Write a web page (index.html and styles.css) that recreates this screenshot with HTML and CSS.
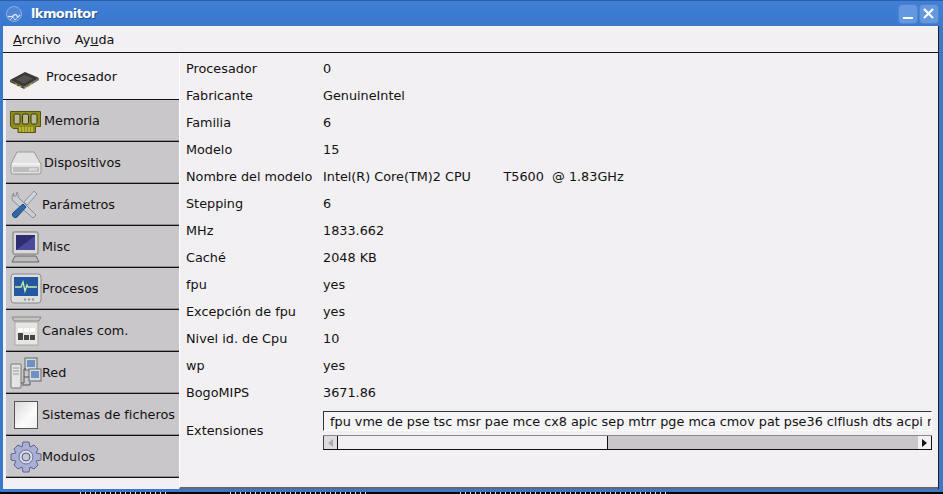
FILE: index.html
```html
<!DOCTYPE html>
<html lang="es">
<head>
    <meta charset="UTF-8">
    <title>lkmonitor</title>
    <link rel="stylesheet" href="styles.css">
</head>
<body>
<div class="window">
    <div class="titlebar">
        <svg class="app-icon" width="18" height="18" viewBox="0 0 18 18">
            <circle cx="9" cy="9" r="7.5" fill="#4f86d6" stroke="#8fb0e2" stroke-width="1"/>
            <path d="M3 12c2-2 3 1 5-1s3-2 4 0 2 0 3-1" fill="none" stroke="#dce8f7" stroke-width="1.3"/>
            <path d="M5 15l3-3 2 3 3-3" fill="none" stroke="#c8daf3" stroke-width="1"/>
        </svg>
        <span class="title">lkmonitor</span>
        <div class="win-buttons">
            <div class="win-btn">
                <svg width="18" height="18" viewBox="0 0 18 18"><path d="M4 13h10" stroke="#fff" stroke-width="2"/></svg>
            </div>
            <div class="win-btn">
                <svg width="18" height="18" viewBox="0 0 18 18"><path d="M4 4l9 9M13 4l-9 9" stroke="#fff" stroke-width="2.2"/></svg>
            </div>
        </div>
    </div>
    <div class="client">
        <div class="menubar">
            <span class="menu"><u>A</u>rchivo</span>
            <span class="menu">Ay<u>u</u>da</span>
        </div>
        <div class="main">
            <div class="tabs">
                <div class="tab tab-active">
                    <svg class="icon" width="32" height="32" viewBox="0 0 32 32">
                        <path d="M0 20L15 12l14 6-15 9z" fill="#3b3936"/>
                        <path d="M0 20v2l14 7v-2z" fill="#4a473c"/>
                        <path d="M14 27v2l15-9v-2z" fill="#6a675c"/>
                        <path d="M5 24l2 1M9 26l2 1M15 28l2-1M20 25l2-1" stroke="#d8c24a" stroke-width="1.2"/>
                        <path d="M6 19.500L15 15l8 3.500-9 5z" fill="#55534f"/>
                    </svg>
                    <span>Procesador</span>
                </div>
                <div class="tab">
                    <svg class="icon" width="34" height="30" viewBox="0 0 34 30">
                        <path d="M.5 5.500h30v15h-5v6H8v-4H3l-2.500-2.500z" fill="#8e8c1e" stroke="#55530f"/>
                        <g fill="#b9b99a" stroke="#34340f">
                            <rect x="4" y="8" width="6" height="10" rx="1.500"/>
                            <rect x="12.500" y="8" width="6" height="10" rx="1.500"/>
                            <rect x="21" y="8" width="6" height="10" rx="1.500"/>
                        </g>
                        <path d="M10 21v5M13 21v5M16 21v5M19 21v5M22 21v5" stroke="#e4d65a"/>
                    </svg>
                    <span>Memoria</span>
                </div>
                <div class="tab">
                    <svg class="icon" width="34" height="30" viewBox="0 0 34 30">
                        <path d="M7 4h17l7 12v8a2 2 0 0 1-2 2H3a2 2 0 0 1-2-2v-8z" fill="#e2e2e2" stroke="#999"/>
                        <path d="M2 16h28" stroke="#f8f8f8" stroke-width="1.400"/>
                        <rect x="3" y="19" width="26" height="5" fill="#bdbdbd"/>
                        <path d="M20 20v3M22 20v3M24 20v3M26 20v3" stroke="#eee"/>
                    </svg>
                    <span>Dispositivos</span>
                </div>
                <div class="tab">
                    <svg class="icon" width="32" height="32" viewBox="0 0 32 32">
                        <path d="M4 4a6 6 0 0 0-1 8l20 17 3-3L8 8a6 6 0 0 0-1-5l-1 4-3 0z" fill="#c9ccd3" stroke="#8b8f98"/>
                        <path d="M24 2l3 3-10 11-3-3z" fill="#d0d3da" stroke="#8f949c"/>
                        <path d="M13 15l3 3-9 10c-2 2-6-1-4-4z" fill="#2f69ad" stroke="#1d4576"/>
                    </svg>
                    <span>Parámetros</span>
                </div>
                <div class="tab">
                    <svg class="icon" width="32" height="32" viewBox="0 0 32 32">
                        <rect x="3" y="1" width="25" height="22" rx="1" fill="#d9d9d9" stroke="#777"/>
                        <path d="M6 4h19v15H6z" fill="#2d2d72"/>
                        <path d="M6 19L25 5v14z" fill="#4a4a9a"/>
                        <path d="M2 31l3-6h21l3 6z" fill="#bcbcbc" stroke="#666"/>
                    </svg>
                    <span>Misc</span>
                </div>
                <div class="tab">
                    <svg class="icon" width="32" height="32" viewBox="0 0 32 32">
                        <rect x="1" y="1" width="30" height="29" rx="3" fill="#dedede" stroke="#8a8a8a"/>
                        <rect x="4" y="4" width="24" height="19" fill="#23579f"/>
                        <path d="M5 14h6l2-5 2 9 2-6 1 2h9" fill="none" stroke="#c9f0a8" stroke-width="1.300"/>
                        <circle cx="15" cy="26.500" r="1.200" fill="#999"/><circle cx="19" cy="26.500" r="1.200" fill="#999"/><circle cx="23" cy="26.500" r="1.200" fill="#999"/>
                    </svg>
                    <span>Procesos</span>
                </div>
                <div class="tab">
                    <svg class="icon" width="32" height="30" viewBox="0 0 32 30">
                        <path d="M2 1h29l-2 4H4z" fill="#c4c4c0" stroke="#888"/>
                        <rect x="5" y="6" width="23" height="23" fill="#e6e6e2" stroke="#aaa"/>
                        <rect x="8" y="12" width="5" height="4" fill="#fff"/><rect x="14" y="12" width="5" height="4" fill="#fff"/><rect x="20" y="12" width="5" height="4" fill="#fff"/>
                        <rect x="8" y="17" width="5" height="7" fill="#444"/><rect x="14" y="19" width="5" height="5" fill="#444"/><rect x="20" y="19" width="5" height="5" fill="#444"/>
                    </svg>
                    <span>Canales com.</span>
                </div>
                <div class="tab">
                    <svg class="icon" width="32" height="32" viewBox="0 0 32 32">
                        <rect x="1" y="7" width="10" height="24" rx="1" fill="#e4e4e4" stroke="#777"/>
                        <path d="M3 11h6M3 14h6M3 17h6" stroke="#999"/>
                        <rect x="15" y="1" width="12" height="12" fill="#d5d8de" stroke="#666"/>
                        <rect x="17" y="3" width="8" height="7" fill="#6d93c4"/>
                        <rect x="19" y="12" width="12" height="12" fill="#d5d8de" stroke="#666"/>
                        <rect x="21" y="14" width="8" height="7" fill="#6d93c4"/>
                        <path d="M11 26h3v-14h2M14 20h5M20 25v3h-8" fill="none" stroke="#555"/>
                    </svg>
                    <span>Red</span>
                </div>
                <div class="tab">
                    <svg class="icon" width="32" height="32" viewBox="0 0 32 32">
                        <defs>
                            <linearGradient id="paper" x1="0" y1="0" x2="1" y2="1">
                                <stop offset="0" stop-color="#d8d8d8"/>
                                <stop offset="0.6" stop-color="#fbfbfb"/>
                                <stop offset="1" stop-color="#eee"/>
                            </linearGradient>
                        </defs>
                        <rect x="4.500" y="2.500" width="23" height="27" fill="url(#paper)" stroke="#555"/>
                    </svg>
                    <span>Sistemas de ficheros</span>
                </div>
                <div class="tab">
                    <svg class="icon" width="32" height="32" viewBox="0 0 32 32">
                        <path d="M13 1h6l1 5 4-2 4 4-2 4 5 1v6l-5 1 2 4-4 4-4-2-1 5h-6l-1-5-4 2-4-4 2-4-5-1v-6l5-1-2-4 4-4 4 2z" fill="#a9b0d4" stroke="#5c6390"/>
                        <circle cx="16" cy="16" r="7" fill="#d9dcee" stroke="#6a7099"/>
                        <circle cx="16" cy="16" r="4" fill="#c9c9c9" stroke="#555c86"/>
                    </svg>
                    <span>Modulos</span>
                </div>
            </div>
            <div class="content">
                <div class="row"><span class="key">Procesador</span><span>0</span></div>
                <div class="row"><span class="key">Fabricante</span><span>GenuineIntel</span></div>
                <div class="row"><span class="key">Familia</span><span>6</span></div>
                <div class="row"><span class="key">Modelo</span><span>15</span></div>
                <div class="row"><span class="key">Nombre del modelo</span><span class="pre">Intel(R) Core(TM)2 CPU        T5600  @ 1.83GHz</span></div>
                <div class="row"><span class="key">Stepping</span><span>6</span></div>
                <div class="row"><span class="key">MHz</span><span>1833.662</span></div>
                <div class="row"><span class="key">Caché</span><span>2048 KB</span></div>
                <div class="row"><span class="key">fpu</span><span>yes</span></div>
                <div class="row"><span class="key">Excepción de fpu</span><span>yes</span></div>
                <div class="row"><span class="key">Nivel id. de Cpu</span><span>10</span></div>
                <div class="row"><span class="key">wp</span><span>yes</span></div>
                <div class="row"><span class="key">BogoMIPS</span><span>3671.86</span></div>
                <div class="row-ext">
                    <span class="key">Extensiones</span>
                    <div class="ext-box">
                        <div class="ext-text">fpu vme de pse tsc msr pae mce cx8 apic sep mtrr pge mca cmov pat pse36 clflush dts acpi r</div>
                        <div class="scrollbar">
                            <div class="sb-btn sb-left"><div class="arrow-left"></div></div>
                            <div class="sb-thumb"></div>
                            <div class="sb-trough"></div>
                            <div class="sb-btn sb-right"><div class="arrow-right"></div></div>
                        </div>
                    </div>
                </div>
            </div>
        </div>
    </div>
</div>
<div class="strip">
    <div class="ticks ticks-a"></div>
    <div class="ticks ticks-b"></div>
    <div class="ticks ticks-c"></div>
</div>
</body>
</html>
```

FILE: styles.css
```css
html, body { margin: 0; padding: 0; height: 494px; overflow: hidden; background: #000; font-family: "DejaVu Sans", sans-serif; font-size: 12.8px; color: #111;}
.window { height: 492px; background: #3a78cc; padding: 0 4px 3px 3px; box-sizing: border-box; display: flex; flex-direction: column; border-top: 1px solid #2b5fa8;}
.titlebar { height: 25px; display: flex; align-items: center; flex-shrink: 0; color: #fff; background: linear-gradient(#3f7fd6, #3a78cc); margin: 0 -4px 0 -3px; padding: 0 4px 0 3px;}
.app-icon { margin-left: 2px;}
.title { margin-left: 8px; font-weight: bold; font-size: 13px; letter-spacing: -0.6px; text-shadow: 1px 1px 1px #1f4d8c;}
.win-buttons { margin-left: auto; display: flex; gap: 1px; margin-right: 0;}
.win-btn { width: 18px; height: 18px; background: #6397df; border: 1px solid #4f83cc; border-radius: 4px;}
.client { flex: 1; display: flex; flex-direction: column; background: #f2f0f2; border-right: 1px solid #222; min-height: 0;}
.menubar { height: 26px; display: flex; align-items: center; gap: 14px; padding-left: 10px; border-bottom: 1px solid #111; flex-shrink: 0;}
.main { flex: 1; display: flex; min-height: 0;}
.tabs { width: 176px; flex-shrink: 0;}
.tab { height: 41px; display: flex; align-items: center; margin-left: 3px; background: #c9c7c9; border-bottom: 1px solid #111; box-shadow: inset 0 -1px 0 #8f8d8f;}
.tab-active { height: 46px; margin-left: 0; padding-left: 3px; background: #f2f0f2; box-shadow: none;}
.tab-active span { margin-left: 4px;}
.icon { flex-shrink: 0; margin-left: 4px;}
.content { flex: 1; padding: 2px 6px 0 6px; border-bottom: 2px solid #666; border-left: 1px solid #fff; min-width: 0;}
.row { height: 27px; display: flex; align-items: center;}
.key { width: 137px; flex-shrink: 0;}
.pre { white-space: pre;}
.row-ext { display: flex; align-items: center; margin-top: 5px;}
.ext-box { width: 609px; min-width: 0;}
.ext-text { height: 20px; line-height: 20px; padding-left: 6px; white-space: nowrap; overflow: hidden; background: #f5f4f6; border-top: 1px solid #333; border-left: 1px solid #333; border-right: 1px solid #fff; border-bottom: 1px solid #fff; box-sizing: border-box;}
.scrollbar { margin-top: 4px; height: 15px; display: flex; background: #c9c7c9; border-top: 1px solid #888; border-bottom: 1px solid #111; box-sizing: border-box;}
.sb-btn { width: 14px; box-sizing: border-box; display: flex; align-items: center; justify-content: center; flex-shrink: 0;}
.sb-left { background: #dedcde; border-left: 1px solid #444;}
.sb-right { background: #f2f0f2; border-right: 1px solid #111;}
.sb-thumb { width: 269px; background: #f2f0f2; border-left: 1px solid #111; border-right: 1px solid #111;}
.sb-trough { flex: 1;}
.arrow-left { width: 0; height: 0; border-top: 4px solid transparent; border-bottom: 4px solid transparent; border-right: 5px solid #aaa;}
.arrow-right { width: 0; height: 0; border-top: 4px solid transparent; border-bottom: 4px solid transparent; border-left: 5px solid #111;}
.strip { height: 2px; background: #000; display: flex; padding-left: 80px;}
.ticks { height: 2px; background: repeating-linear-gradient(90deg, #ddd 0 1px, transparent 1px 5px);}
.ticks-a { width: 90px; margin-right: 60px;}
.ticks-b { width: 140px; margin-right: 90px;}
.ticks-c { width: 210px;}
```
